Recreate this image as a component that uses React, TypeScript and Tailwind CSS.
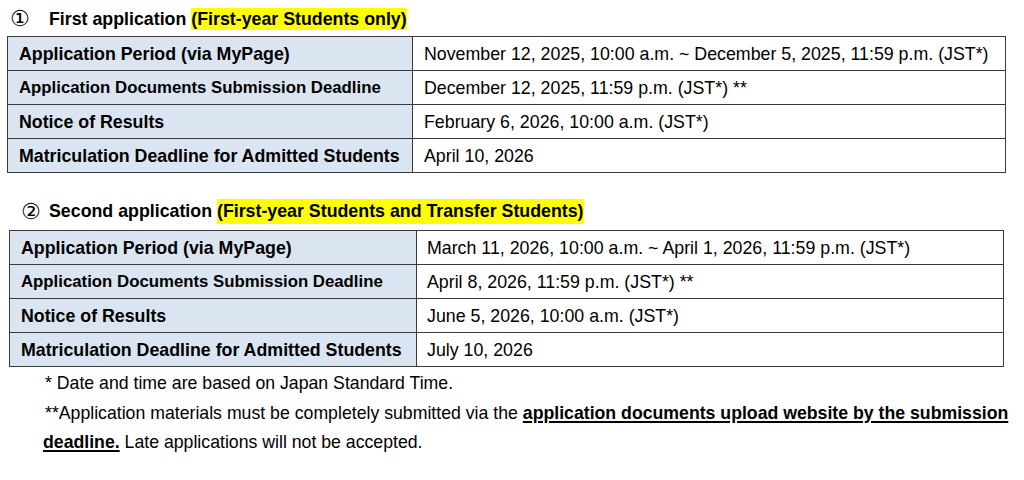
const rows1 = [
  { label: "Application Period (via MyPage)", value: "November 12, 2025, 10:00 a.m. ~ December 5, 2025, 11:59 p.m. (JST*)" },
  { label: "Application Documents Submission Deadline", value: "December 12, 2025, 11:59 p.m. (JST*) **", small: true },
  { label: "Notice of Results", value: "February 6, 2026, 10:00 a.m. (JST*)" },
  { label: "Matriculation Deadline for Admitted Students", value: "April 10, 2026" },
];

const rows2 = [
  { label: "Application Period (via MyPage)", value: "March 11, 2026, 10:00 a.m. ~ April 1, 2026, 11:59 p.m. (JST*)" },
  { label: "Application Documents Submission Deadline", value: "April 8, 2026, 11:59 p.m. (JST*) **", small: true },
  { label: "Notice of Results", value: "June 5, 2026, 10:00 a.m. (JST*)" },
  { label: "Matriculation Deadline for Admitted Students", value: "July 10, 2026" },
];

type Row = { label: string; value: string; small?: boolean };

function ScheduleTable({ rows, labelWidth, tableWidth, pad }: { rows: Row[]; labelWidth: string; tableWidth: string; pad: string }) {
  return (
    <table className={`border-collapse border border-[#4a4a4a] ${tableWidth}`}>
      <tbody>
        {rows.map((r) => (
          <tr key={r.label} className="h-[34px]">
            <td
              className={`border border-[#3a3a3a] bg-[#dbe5f1] font-bold pl-[11px] leading-[20px] whitespace-nowrap ${labelWidth} ${
                r.small ? "text-[16.8px]" : "text-[17.8px]"
              }`}
            >
              {r.label}
            </td>
            <td className={`border border-[#3a3a3a] text-[17.8px] leading-[20px] whitespace-nowrap ${pad}`}>{r.value}</td>
          </tr>
        ))}
      </tbody>
    </table>
  );
}

export default function App() {
  return (
    <div className="w-[1024px] h-[480px] bg-white text-black font-['Liberation_Sans',Arial,sans-serif] overflow-hidden">
      {/* first application */}
      <div className="pt-[8px] pl-[10px] flex items-center h-[30px] text-[17.8px] font-bold">
        <span className="font-['DejaVu_Sans',sans-serif] font-normal text-[22px] leading-none w-[39px]">①</span>
        <span className="leading-[22px]">First application&nbsp;</span>
        <span className="bg-[#ffff00] leading-[22px]">(First-year Students only)</span>
      </div>
      <div className="pl-[7px] pt-[6px]">
        <ScheduleTable rows={rows1} labelWidth="w-[405px]" tableWidth="w-[999px]" pad="pl-[11px]" />
      </div>

      {/* second application */}
      <div className="pt-[26px] pl-[21px] flex items-center h-[25px] box-content text-[17.8px] font-bold">
        <span className="font-['DejaVu_Sans',sans-serif] font-normal text-[22px] leading-none w-[28px]">②</span>
        <span className="leading-[25px]">Second application&nbsp;</span>
        <span className="bg-[#ffff00] leading-[25px]">(First-year Students and Transfer Students)</span>
      </div>
      <div className="pl-[9px] pt-[6px]">
        <ScheduleTable rows={rows2} labelWidth="w-[407px]" tableWidth="w-[995px]" pad="pl-[10px]" />
      </div>

      {/* notes */}
      <div className="pl-[43px] pt-[2px] text-[17.7px] leading-[29.5px]">
        <p className="pl-[2px]">* Date and time are based on Japan Standard Time.</p>
        <p className="pl-[2px] whitespace-nowrap">
          **Application materials must be completely submitted via the{" "}
          <span className="font-bold underline decoration-2 underline-offset-2">
            application documents upload website by the submission
          </span>
        </p>
        <p>
          <span className="font-bold underline decoration-2 underline-offset-2">deadline.</span> Late applications
          will not be accepted.
        </p>
      </div>
    </div>
  );
}
